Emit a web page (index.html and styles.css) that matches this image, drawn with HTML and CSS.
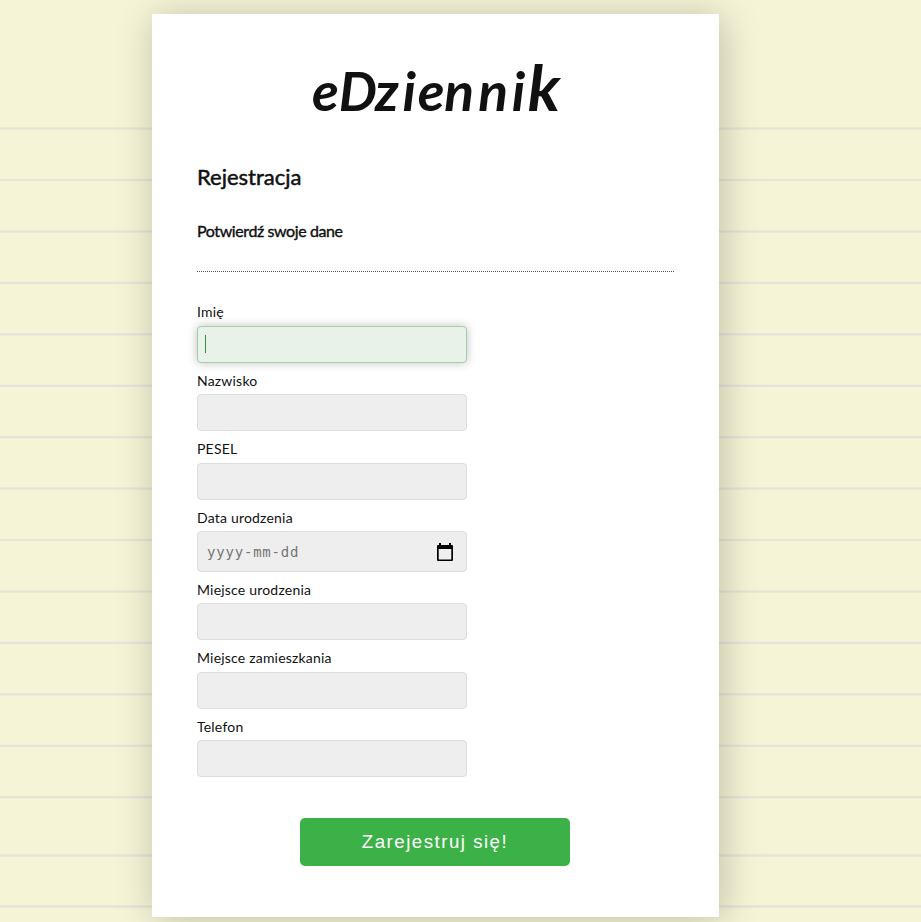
FILE: index.html
```html
<!DOCTYPE html>
<html lang="pl">
<head>
<meta charset="utf-8">
<title>eDziennik</title>
<link rel="stylesheet" href="styles.css">
</head>
<body>
<main class="card">
  <svg class="logo" width="270" height="75" viewBox="0 0 270 75" role="img" aria-label="eDziennik">
    <text transform="scale(1.08 1.06)" y="58" x="11 36 69.5 95 109 133.5 165 196"><tspan>e</tspan><tspan class="cap">D</tspan><tspan>zienni</tspan><tspan class="tall" x="211">k</tspan></text>
  </svg>
  <h1>Rejestracja</h1>
  <h2>Potwierdź swoje dane</h2>
  <form>
    <label>Imię</label><div class="field focused"><span class="caret"></span></div>
    <label>Nazwisko</label><div class="field"></div>
    <label>PESEL</label><div class="field"></div>
    <label>Data urodzenia</label>
    <div class="field date"><span>yyyy-mm-dd</span>
      <svg width="18" height="19" viewBox="0 0 18 19"><path fill="#000" fill-rule="evenodd" d="M3 0h2v2h8V0h2v2h1q1 0 1 1v14q0 1-1 1H2q-1 0-1-1V3q0-1 1-1h1zM2.7 6v10.4h12.6V6z"/></svg>
    </div>
    <label>Miejsce urodzenia</label><div class="field"></div>
    <label>Miejsce zamieszkania</label><div class="field"></div>
    <label>Telefon</label><div class="field"></div>
    <button type="button">Zarejestruj się!</button>
  </form>
</main>
</body>
</html>
```
FILE: styles.css
```css
* { box-sizing: border-box; }
html { height: 922px; overflow: hidden; }
body {
  margin: 0;
  height: 922px;
  overflow: hidden;
  padding: 14px 0 0 152px;
  font-family: Lato, sans-serif;
  color: #111;
  background-color: #f5f4d6;
  background-image:
    linear-gradient(#eeebd8, #e6e3d9 35%, #e6e3d9 65%, #eeebd8),
    linear-gradient(#eeebd8, #e6e3d9 35%, #e6e3d9 65%, #eeebd8),
    repeating-linear-gradient(#f5f4d6 0, #e6e3d9 1px, #e6e3d9 2.2px, #f5f4d6 3.2px, #f5f4d6 51.43px);
  background-size: 100% 3px, 100% 3px, 100% 672px;
  background-position: 0 854px, 0 905px, 0 127px;
  background-repeat: no-repeat;
}
.card {
  width: 567px;
  height: 903px;
  padding: 36px 45px 0;
  background: #fff;
  box-shadow: 3px 3px 36px rgba(0, 0, 0, .22);
}
.logo { display: block; margin-left: 103px; overflow: visible; }
.logo text {
  font: italic bold 51px Lato, sans-serif;
  fill: #111;
}
.logo .cap { font-size: 50px; }
.logo .tall { font-size: 60px; }
h1, h2 { margin: 0; font-weight: 400; -webkit-text-stroke: .5px #111; }
h1 { font-size: 22px; line-height: 30px; margin-top: 37px; }
h2 { font-size: 16px; line-height: 20px; margin-top: 29px; letter-spacing: -.4px; -webkit-text-stroke-width: .4px; }
form { margin-top: 30px; border-top: 1px dotted #555; padding-top: 30.4px; }
label { display: block; height: 20px; font-size: 14px; line-height: 20px; letter-spacing: .2px; margin-bottom: 3.5px; }
.field {
  display: flex;
  align-items: center;
  width: 270px;
  height: 37px;
  margin-bottom: 7.9px;
  padding: 0 7px;
  border: 1px solid #ddd;
  border-radius: 4px;
  background: #eee;
}
.focused { background: #e8f2e9; border-color: #a5cfa7; box-shadow: 0 0 10px rgba(0, 0, 0, .25); }
.caret { width: 1px; height: 18px; background: #388e3c; margin-top: -1px; }
.date {
  height: 40.8px;
  justify-content: space-between;
  padding: 1px 12px 0 9px;
  font: 14px "DejaVu Sans Mono", monospace;
  letter-spacing: .8px;
  color: #757575;
}
.date svg { margin-top: 1px; }
button {
  display: block;
  width: 270px;
  height: 48px;
  margin: 41px 0 0 103px;
  padding: 0;
  border: 0;
  border-radius: 5px;
  background: #3bb148;
  color: #fff;
  font: 18.67px "Liberation Sans", sans-serif;
  letter-spacing: 1.5px;
}
```
